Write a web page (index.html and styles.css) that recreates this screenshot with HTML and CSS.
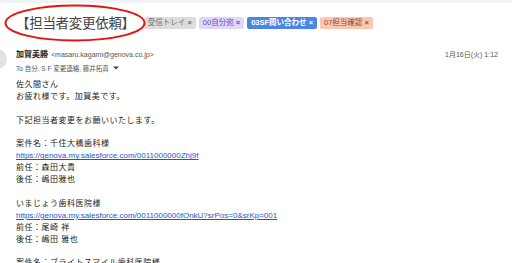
FILE: index.html
```html
<!DOCTYPE html>
<html lang="ja">
<head>
<meta charset="utf-8">
<link rel="stylesheet" href="styles.css">
</head>
<body>
<div class="topband"></div>
<header class="subject-row">
  <h1 class="subject">【担当者変更依頼】</h1>
  <div class="labels">
    <span class="label l-grey">受信トレイ <span class="x">×</span></span>
    <span class="label l-purple">00自分宛 <span class="x">×</span></span>
    <span class="label l-blue">03SF問い合わせ <span class="x">×</span></span>
    <span class="label l-peach">07担当確認 <span class="x">×</span></span>
  </div>
  <svg class="circle-mark" width="142" height="38" viewBox="0 0 142 38"><ellipse cx="71" cy="19" rx="69.5" ry="17.5" fill="none" stroke="#e5120e" stroke-width="2"/></svg>
</header>
<section class="message">
  <div class="avatar"></div>
  <div class="meta">
    <div class="from-row">
      <span class="name">加賀美勝</span>
      <span class="email">&lt;masaru.kagami@genova.co.jp&gt;</span>
      <span class="date">1月16日(火) 1:12</span>
    </div>
    <div class="to">To 自分, S F 変更連絡, 藤井拓真 <svg class="caret" width="6" height="4" viewBox="0 0 6 4"><path d="M0 0.5h6L3 3.5z" fill="#444"/></svg></div>
  </div>
</section>
<div class="body">
  <p>佐久間さん</p>
  <p>お疲れ様です。加賀美です。</p>
  <p class="blank"></p>
  <p>下記担当者変更をお願いいたします。</p>
  <p class="blank"></p>
  <p>案件名：千住大橋歯科様</p>
  <p><a href="#">https://genova.my.salesforce.com/0011000000Zhj9f</a></p>
  <p>前任：森田大貴</p>
  <p>後任：嶋田雅也</p>
  <p class="blank"></p>
  <p>いまじょう歯科医院様</p>
  <p><a href="#">https://genova.my.salesforce.com/0011000000fOnkU?srPos=0&amp;srKp=001</a></p>
  <p>前任：尾崎 祥</p>
  <p>後任：嶋田 雅也</p>
  <p class="blank"></p>
  <p>案件名：ブライトスマイル歯科医院様</p>
</div>
</body>
</html>
```
FILE: styles.css
```css
* { box-sizing: border-box; margin: 0; padding: 0; }
html, body { width: 512px; height: 263px; overflow: hidden; background: #fff; }
body {
  font-family: "Liberation Sans", Arial, "Noto Sans CJK JP", sans-serif;
  color: #222;
}
.topband { height: 3px; background: #f1f4f4; }
.subject-row {
  position: relative;
  height: 37px;
  display: flex;
  align-items: center;
  padding-left: 16px;
}
.subject {
  font-family: "Noto Sans CJK JP", sans-serif;
  font-size: 13.5px;
  font-weight: 400;
  color: #444;
  letter-spacing: -0.3px;
  margin-right: 9px;
  margin-top: 1px;
}
.labels { display: flex; gap: 3px; margin-top: 2px; }
.label {
  font-family: "Liberation Sans", "Noto Sans CJK JP", sans-serif;
  font-size: 7.5px;
  height: 12px;
  line-height: 12px;
  padding: 0 4px;
  border-radius: 2px;
  white-space: nowrap;
}
.label .x { font-weight: 700; }
.l-grey { background: #dddddd; color: #707070; }
.l-purple { background: #e1d7fb; color: #6a4cc0; }
.l-blue { background: #4a86e8; color: #fff; font-weight: 700; }
.l-peach { background: #fdc7b0; color: #8a4b36; }
.circle-mark { position: absolute; left: 4px; top: 1px; }
.message { display: flex; margin-top: 7px; }
.avatar {
  width: 20px; height: 20px;
  border-radius: 50%;
  background: #e2e2e2;
  margin-left: -13px;
  margin-right: 9px;
  margin-top: 2px;
  flex: none;
}
.meta { flex: 1; padding-right: 14px; }
.from-row { display: flex; align-items: baseline; height: 13px; padding-top: 1px; }
.name {
  font-family: "Noto Sans CJK JP", sans-serif;
  font-weight: 700; font-size: 8px; color: #222; margin-right: 3px;
}
.email { font-size: 7px; color: #555; }
.date { margin-left: auto; font-size: 7px; color: #555; font-family: "Liberation Sans", "Noto Sans CJK JP", sans-serif; }
.to {
  font-size: 6.5px; color: #555; margin-top: 3px; height: 10px;
  display: flex; align-items: center; gap: 3px;
}
.caret { margin-left: 1px; }
.body {
  padding-left: 16px;
  margin-top: 6px;
  font-size: 8px;
  line-height: 11.9px;
  color: #222;
}
.body p { height: 11.9px; white-space: nowrap; letter-spacing: 0.5px; }
.body a { color: #1a56d8; text-decoration: underline; letter-spacing: 0; }
```
